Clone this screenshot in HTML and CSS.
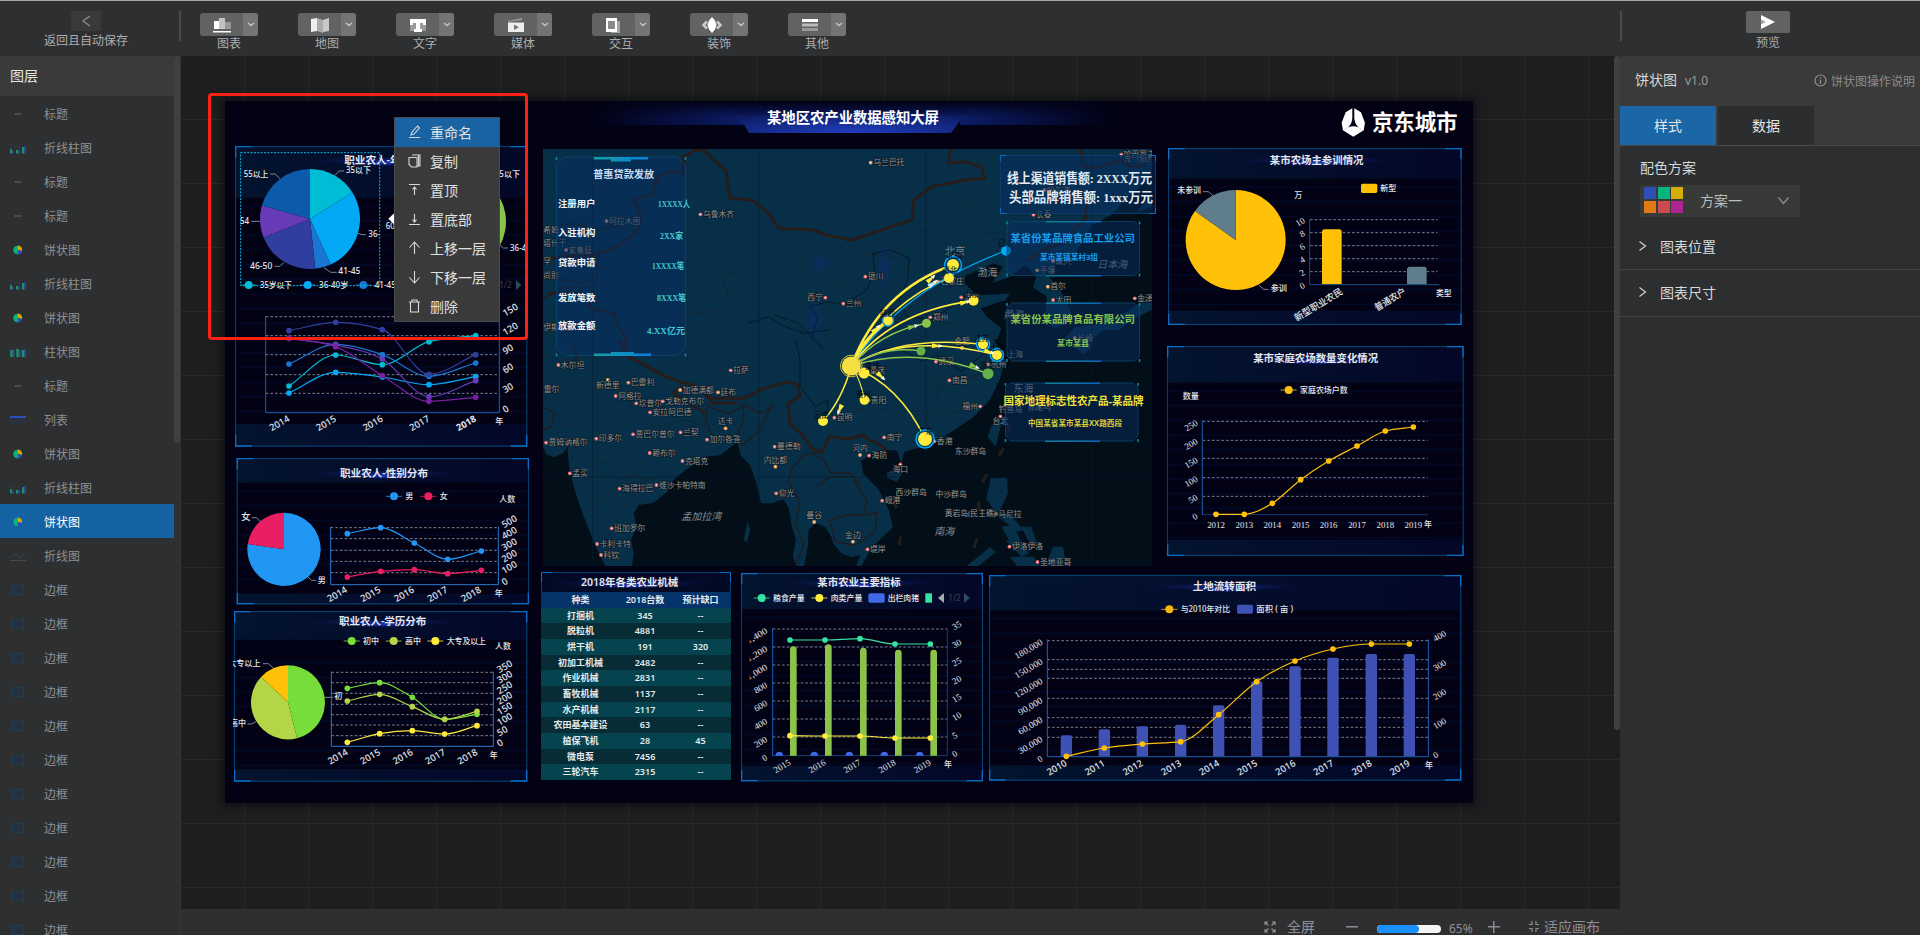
FILE: index.html
```html
<!DOCTYPE html>
<html lang="zh-CN">
<head>
<meta charset="utf-8">
<title>某地区农产业数据感知大屏</title>
<link rel="stylesheet" href="styles.css">
</head>
<body>
<div class="app">
  <header class="topbar">
    <div class="back">
      <div class="back-btn"><svg width="10" height="12" viewBox="0 0 10 12"><path d="M9 1 2 6l7 5" class="ln"/></svg></div>
      <span>返回且自动保存</span>
    </div>
    <div class="tools" id="tools"></div>
    <div class="preview">
      <div class="preview-btn"><svg width="14" height="14" viewBox="0 0 14 14"><path d="M0 0l14 7-14 7z" fill="#fff"/><path d="M0 4.500L5 7 0 9.500z" fill="#a5a5a5"/></svg></div>
      <span>预览</span>
    </div>
  </header>
  <div class="body">
    <aside class="layers">
      <div class="layers-main">
        <h2 class="layers-title">图层</h2>
        <ul class="layer-list" id="layers"></ul>
      </div>
      <div class="track"><div class="thumb thumb-left"></div></div>
    </aside>
    <main class="center">
      <div class="stage">
        <div class="board">
          <svg class="w w-title" viewBox="0 0 1248 40">
            <defs>
              <linearGradient id="wing"><stop offset="0" stop-color="#0a1a6a" stop-opacity="0"/><stop offset="1" stop-color="#0c1c66"/></linearGradient>
              <linearGradient id="wingR"><stop offset="0" stop-color="#0c1c66"/><stop offset="1" stop-color="#0a1a6a" stop-opacity="0"/></linearGradient>
              <radialGradient id="glow" cx=".5" cy="1" r=".75"><stop offset="0" stop-color="#1f3fc0"/><stop offset="1" stop-color="#0b1758"/></radialGradient>
              <linearGradient id="fadeUp" x2="0" y2="1"><stop offset="0" stop-color="#020214"/><stop offset="1" stop-color="#020214" stop-opacity="0"/></linearGradient>
            </defs>
            <rect x="370" y="0" width="150" height="24" fill="url(#wing)"/>
            <rect x="735" y="0" width="150" height="24" fill="url(#wingR)"/>
            <path d="M505 0h245L726 32H524z" fill="url(#glow)"/>
            <rect x="370" y="0" width="515" height="16" fill="url(#fadeUp)"/>
            <text x="628" y="21.500" class="title-text" text-anchor="middle" textLength="172">某地区农产业数据感知大屏</text>
          </svg>
          <svg class="w w-logo" viewBox="574 82 355 92">
            <g fill="#fff">
              <path d="M608 85l-20 12-6 16-6 16 4 24 16-11q12-12 12-30z"/>
              <path d="M614 85l20 12 6 16 6 16-4 24-16-11q-12-12-12-30z"/>
              <path d="M581 152q30-26 60 0l-30 19z"/>
            </g>
            <text x="667" y="151" class="logo-text" textLength="258">京东城市</text>
          </svg>
          <svg class="w w-age" id="age" viewBox="45 45 879 909"></svg>
          <svg class="w w-sex" id="sex" viewBox="48 21 882 444"></svg>
          <svg class="w w-edu" id="edu" viewBox="39 480 885 516"></svg>
          <svg class="w w-map" id="map" viewBox="543 149 609 417"></svg>
          <div class="w w-machines">
            <svg class="machines-title" viewBox="0 0 190 20" id="mtitle"></svg>
            <div class="machine-table" id="machines"></div>
          </div>
          <svg class="w w-index" id="index" viewBox="615 37 732 630"></svg>
          <svg class="w w-land" id="land" viewBox="24 12 1422 624"></svg>
          <svg class="w w-train" id="train" viewBox="51 201 888 537"></svg>
          <svg class="w w-farm" id="farm" viewBox="48 15 897 636"></svg>
        </div>
        <div class="highlight"></div>
        <ul class="menu" id="menu"></ul>
        <div class="thumb thumb-stage"></div>
      </div>
      <footer class="zoombar">
        <svg class="ico-full" width="12" height="12" viewBox="0 0 12 12"><path d="M1 4V1h3M8 1h3v3M11 8v3H8M4 11H1V8M1 1l3.500 3.500M11 1 7.500 4.500M11 11 7.500 7.500M1 11l3.500-3.500" class="ln"/></svg>
        <span class="full-text">全屏</span>
        <span class="minus"></span>
        <span class="bar"><i></i></span>
        <span class="pct">65%</span>
        <span class="plus"></span>
        <svg class="ico-fit" width="10" height="11" viewBox="0 0 10 11"><path d="M0 3.500h3V0M7 0v3.500h3M10 7.500H7V11M3 11V7.500H0" class="ln"/></svg>
        <span>适应画布</span>
      </footer>
    </main>
    <aside class="props">
      <div class="props-head">
        <span class="props-name">饼状图</span><span class="props-ver">v1.0</span>
        <span class="props-help"><svg width="13" height="13" viewBox="0 0 13 13"><circle cx="6.500" cy="6.500" r="5.500" class="ln"/><path d="M6.500 3v1.300M6.500 5.500V10" class="ln"/></svg>饼状图操作说明</span>
      </div>
      <div class="tabs"><span class="tab on">样式</span><span class="tab">数据</span></div>
      <div class="scheme">
        <div class="scheme-label">配色方案</div>
        <div class="select">
          <div class="swatches"><i class="s1"></i><i class="s2"></i><i class="s3"></i><i class="s4"></i><i class="s5"></i><i class="s6"></i></div>
          <span>方案一</span>
          <svg width="11" height="8" viewBox="0 0 11 8"><path d="M.5.5l5 6 5-6" class="ln"/></svg>
        </div>
      </div>
      <div class="fold"><svg width="8" height="10" viewBox="0 0 8 10"><path d="M.5.5l6 4.500-6 4.500" class="ln lt"/></svg>图表位置</div>
      <div class="fold fold2"><svg width="8" height="10" viewBox="0 0 8 10"><path d="M.5.5l6 4.500-6 4.500" class="ln lt"/></svg>图表尺寸</div>
    </aside>
  </div>
</div>
<script src="app.js"></script>
</body>
</html>
```

FILE: styles.css
```css
* { box-sizing: border-box; }
body { margin: 0; background: #2e2f30; overflow: hidden; font-family: "Noto Sans", "Noto Sans CJK SC", sans-serif; font-size: 12px; color: #adadad; }
h2, ul { margin: 0; padding: 0; font-weight: normal; list-style: none; }
svg { display: block; flex: none; }
.ln { fill: none; stroke: #909090; stroke-width: 1.2; }
.lt { stroke: #d0d0d0; }
.app { width: 1920px; height: 935px; display: flex; flex-direction: column; }

.topbar { height: 56px; flex: none; display: flex; border-top: 1px solid #a9a9a9; background: #2e2f30; line-height: 16px; }
.back { width: 181px; padding: 10px 9px 0 0; display: flex; flex-direction: column; align-items: center; gap: 2px; background: linear-gradient(#4a4b4b, #4a4b4b) 179px 10px / 2px 30px no-repeat; }
.back-btn { width: 30px; height: 20px; display: flex; align-items: center; justify-content: center; background: #393a39; border-radius: 2px; }
.tools { width: 1439px; display: flex; gap: 40px; padding: 12px 0 0 19px; }
.tool { width: 58px; display: flex; flex-direction: column; align-items: center; }
.tool-btn { width: 58px; height: 23px; display: flex; border-radius: 3px; overflow: hidden; background: #616362; }
.tool-ico { flex: 1; display: flex; align-items: center; justify-content: center; }
.tool-drop { width: 15px; background: #737574; display: flex; align-items: center; justify-content: center; }
.preview { flex: 1; display: flex; flex-direction: column; align-items: center; gap: 2px; padding: 10px 4px 0 0; background: linear-gradient(#4a4b4b, #4a4b4b) 0 10px / 2px 30px no-repeat; }
.preview-btn { width: 44px; height: 22px; background: #616362; border-radius: 2px; display: flex; align-items: center; justify-content: center; }

.body { flex: 1; min-height: 0; display: flex; }
.layers { width: 181px; display: flex; border-right: 1px solid #333435; overflow: hidden; }
.layers-main { width: 174px; }
.layers-title { height: 40px; line-height: 40px; padding-left: 10px; background: #393a39; color: #e6e6e6; font-size: 14px; }
.layer { height: 34px; display: flex; align-items: center; gap: 17px; padding: 1px 0 0 9px; color: #8e8f92; }
.layer.on { background: #1562a2; color: #fff; }
.thumb { width: 6px; background: #3f4040; border-radius: 3px; }
.thumb-left { height: 387px; }
.thumb-stage { position: absolute; right: 0; top: 0; height: 674px; }

.center { width: 1439px; display: flex; flex-direction: column; }
.stage { flex: 1; position: relative; overflow: hidden; background-color: #1d1e20; background-image: linear-gradient(90deg, transparent 63px, #28292b 63px), linear-gradient(transparent 63px, #28292b 63px); background-size: 64px 64px; }
.board { position: absolute; left: 44px; top: 45px; width: 1248px; height: 702px; background: #020214; box-shadow: 0 0 8px 3px rgba(0, 0, 0, .5); overflow: hidden; }
.w { position: absolute; }
.w-title { left: 0; top: 0; width: 1248px; height: 40px; }
.w-logo { left: 1116px; top: 6px; width: 118px; height: 31px; }
.w-age { left: 10px; top: 44px; width: 293px; height: 303px; }
.w-sex { left: 11px; top: 356px; width: 294px; height: 148px; }
.w-edu { left: 8px; top: 509px; width: 295px; height: 172px; }
.w-map { left: 318px; top: 48px; width: 609px; height: 417px; overflow: visible; }
.w-machines { left: 316px; top: 471px; width: 190px; height: 208px; display: flex; flex-direction: column; }
.w-index { left: 515px; top: 471px; width: 244px; height: 210px; }
.w-land { left: 763px; top: 473px; width: 474px; height: 208px; }
.w-train { left: 942px; top: 46px; width: 296px; height: 179px; }
.w-farm { left: 941px; top: 244px; width: 299px; height: 212px; }
.title-text { font-size: 14.4px; font-weight: 700; fill: #fff; }
.logo-text { font-size: 65px; font-weight: 700; fill: #fff; font-family: "Noto Sans CJK SC", sans-serif; }
.machines-title { width: 190px; height: 20px; }
.machine-table { flex: 1; display: flex; flex-direction: column; }
.mrow { flex: 1; display: grid; grid-template-columns: 79px 50px 61px; align-items: center; text-align: center; font-size: 9px; font-weight: 600; line-height: 12px; color: #e2eaec; white-space: nowrap; background: #082c36; }
.mrow:nth-child(even) { background: #05434f; }
.mrow:first-child { background: #06336a; }

.highlight { position: absolute; left: 27px; top: 37px; width: 320px; height: 247px; border: 3px solid #ff2014; border-radius: 4px; }
.menu { position: absolute; left: 213px; top: 61px; width: 106px; border: 1px solid #4a4c4c; background: #393a39; color: #e0e0e0; font-size: 14px; }
.menu li { height: 29px; display: flex; align-items: center; gap: 9px; padding: 0 0 2px 13px; }
.menu li:first-child { background: #1963a3; }
.menu .ln { stroke: #d8d8d8; stroke-width: 1.1; }

.zoombar { height: 26px; display: flex; align-items: center; padding: 9px 20px 0 1083px; font-size: 14px; line-height: 17px; background: #2e2f31; color: #8f8f93; white-space: nowrap; }
.full-text { margin-left: 11px; width: 59px; }
.minus, .plus { width: 12px; height: 12px; background: linear-gradient(#8a8a8e, #8a8a8e) center / 12px 1.5px no-repeat; }
.plus { margin-left: 15px; width: 12px; background: linear-gradient(#8a8a8e, #8a8a8e) center / 12px 1.5px no-repeat, linear-gradient(#8a8a8e, #8a8a8e) center / 1.5px 12px no-repeat; }
.bar { margin: 4px 0 0 19px; width: 64px; height: 8px; border-radius: 4px; background: #f5f5f5; overflow: hidden; }
.bar i { display: block; width: 42px; height: 8px; border-radius: 4px; background: #1890ff; }
.pct { margin: 4px 0 0 8px; width: 24px; font-size: 12px; line-height: 13px; }
.ico-fit { margin: 0 5px 0 29px; }

.props { width: 300px; background: #2d2e30; color: #d8d8d8; font-size: 14px; white-space: nowrap; }
.props-head { height: 50px; display: flex; align-items: center; padding: 0 5px 4px 15px; background: #393a39; }
.props-ver { margin: 3px 0 0 8px; font-size: 12px; color: #9b9b9b; }
.props-help { margin: 3px 0 0 auto; display: flex; align-items: center; gap: 4px; font-size: 12px; color: #8c8c90; }
.tabs { height: 40px; display: flex; gap: 2px; background: #393a39; border-bottom: 1px solid #48494a; }
.tab { width: 96px; line-height: 40px; text-align: center; background: #2c2d2f; color: #e6e6e6; }
.tab.on { background: #1b66a5; }
.scheme { height: 78px; padding: 12px 20px 0; }
.scheme-label { line-height: 20px; margin-bottom: 7px; }
.select { width: 160px; height: 32px; display: flex; align-items: center; background: #383a38; padding-left: 4px; border-radius: 2px; color: #bcbcbc; }
.select span { width: 78px; margin: -2px 0 0 17px; }
.swatches { display: grid; grid-template-columns: 12px 12px 12px; gap: 2px 1.5px; margin-top: -2px; }
.swatches i { height: 12px; }
.s1 { background: #2d4fb8; } .s2 { background: #06b67c; } .s3 { background: #d2ae06; }
.s4 { background: #e27a14; } .s5 { background: #cb4a4f; } .s6 { background: #ae2591; }
.fold { height: 46px; display: flex; align-items: center; gap: 13px; padding: 0 0 2px 19px; border-bottom: 1px solid #444546; }
.fold2 { height: 47px; }

.t { fill: #e4e7ed; font-weight: 500; font-family: "Noto Sans", "Noto Sans CJK SC", sans-serif; }
.sm { font-size: 24px; }
.num { font-size: 28px; }
.b { font-weight: 700; }
.sim { font-family: "Liberation Serif", "Noto Sans CJK SC", serif; font-size: 27px; }
.h { font-size: 31px; font-weight: 600; }
.dash { stroke: #8d919b; stroke-width: 2.6; stroke-dasharray: 8 6; fill: none; }
.axis { stroke: #1b62b5; stroke-width: 3; fill: none; }
.lead { stroke: #9aa3ad; stroke-width: 2.4; fill: none; }
.city { font-size: 7.8px; fill: #9a9592; paint-order: stroke; stroke: #04121c; stroke-width: 1; }
.sea { font-size: 10px; fill: #858c94; }
.border { fill: none; stroke: #261d1a; stroke-width: 3; stroke-linejoin: round; vector-effect: non-scaling-stroke; }
.thin { stroke-width: 1.4; stroke: #1f1d1e; }
.prov { stroke-width: .9; stroke-dasharray: 3 2; stroke: #171f27; }
.river { fill: none; stroke: #051824; stroke-width: 1; vector-effect: non-scaling-stroke; }
```

FILE: app.js
```js
const $ = id => document.getElementById(id);

/* ---------- editor chrome ---------- */
const toolIcons = {
  '图表': '<path d="M2 4h6v8H2z" fill="#fff"/><path d="M7 1h6v11H7z" fill="#c4c4c4"/><path d="M13 5h6v7h-6z" fill="#989a99"/><path d="M1 14h18v1.500H1z" fill="#fff"/>',
  '地图': '<path d="M1 2l6-1v13l-6 1z" fill="#eee"/><path d="M7 1l6 2v13l-6-2z" fill="#aaa"/><path d="M13 3l6-2v13l-6 1z" fill="#c8c8c8"/>',
  '文字': '<path d="M2 2h16v12H2z" fill="#999"/><path d="M2 2h16v6h-3V6h-3v6h2v3H6v-3h2V6H5v2H2z" fill="#fff"/>',
  '媒体': '<path d="M2 5.500h16V15H2z" fill="#eee"/><path d="M2 4L16 1v2L2 5z" fill="#999"/><path d="M8 7.500l5 2.700-5 2.700z" fill="#777"/>',
  '交互': '<path d="M7 4h9v12H7z" fill="#a5a5a5"/><path d="M2 1h11v14H2z" fill="#fff"/><path d="M4 4h7v8H4z" fill="#8a8a8a"/>',
  '装饰': '<path d="M10 0l3 3.500 1.500 4.500-1.500 4.500L10 16l-3-3.500L5.500 8 7 3.500z" fill="#fff"/><path d="M5 4.500L1.500 8 5 11.500M15 4.500l3.500 3.500-3.500 3.500" fill="none" stroke="#ccc" stroke-width="2.500"/>',
  '其他': '<path d="M2 2h16v3H2z" fill="#fff"/><path d="M2 6.500h16v3H2z" fill="#bbb"/><path d="M2 11h16v3H2z" fill="#999"/>'
};
$('tools').innerHTML = Object.entries(toolIcons).map(([n, p]) =>
  `<div class="tool"><div class="tool-btn"><div class="tool-ico"><svg width="20" height="16" viewBox="0 0 20 16">${p}</svg></div><div class="tool-drop"><svg width="8" height="5" viewBox="0 0 8 5"><path d="M1 1l3 2.500L7 1" fill="none" stroke="#c4c4c4" stroke-width="1.5"/></svg></div></div><span>${n}</span></div>`).join('');

const layerIcons = {
  '标题': '<path d="M6 6h6" stroke="#888" stroke-dasharray="1.500 1"/>',
  '折线柱图': '<path d="M2 7v4.500M8 8v3.500M14 5v6.500" stroke="#159468" stroke-width="2"/><path d="M4 9v2.500M10 8v3.500M16 4v7.500" stroke="#2d4fb8" stroke-width="1.500"/><path d="M1 5h13" stroke="#2c3c68" stroke-dasharray="2 2"/>',
  '饼状图': '<path d="M9 6V1.500A4.500 4.500 0 0 1 13 7z" fill="#d2ae06"/><path d="M9 6l4 1a4.500 4.500 0 0 1-4.500 3.500z" fill="#2d4fb8"/><path d="M9 6l-.5 4.500A4.500 4.500 0 0 1 6 2.500L9 1.500z" fill="#06b67c"/>',
  '柱状图': '<path d="M2.500 4v7M8.500 3v8M14 4v7" stroke="#159468" stroke-width="2.500"/><path d="M4.500 3v8M10.500 4v7M16 3v8" stroke="#2d4fb8" stroke-width="1.500"/>',
  '列表': '<path d="M1 3h16" stroke="#2d4fb8" stroke-width="2"/><path d="M1 4h16v6H1z" fill="#2a3040"/>',
  '折线图': '<path d="M1 8l5-4 5 3 5-4" stroke="#3a4254" fill="none"/><path d="M1 10.500h16" stroke="#4a4a3c"/>',
  '边框': '<path d="M3.500 1.500h11v9h-11z" fill="#26313f" stroke="#1f3f56"/>'
};
const layers = '标题,折线柱图,标题,标题,饼状图,折线柱图,饼状图,柱状图,标题,列表,饼状图,折线柱图,饼状图,折线图'.split(',').concat(Array(11).fill('边框'));
$('layers').innerHTML = layers.map((n, i) =>
  `<li class="layer${i === 12 ? ' on' : ''}"><svg width="18" height="12" viewBox="0 0 18 12">${layerIcons[n]}</svg><span>${n}</span></li>`).join('');

const menu = [
  ['重命名', 'M1 12.500h11M3 10l1-3 5.500-6 2 2L6 9z'],
  ['复制', 'M4 1h8v11H9.500M1 3.500h8V13H3.500L1 10.500zM10.500 1v11'],
  ['置顶', 'M1 1.500h11M6.500 12V4M4.500 6.500l2-2.500 2 2.500'],
  ['置底部', 'M1 12.500h11M6.500 2v8M4.500 7.500l2 2.500 2-2.500'],
  ['上移一层', 'M6.500 13V1M1.500 6.500l5-5.500 5 5.500'],
  ['下移一层', 'M6.500 1v12M1.500 7.500l5 5.500 5-5.500'],
  ['删除', 'M1 3h11M4 3V1h5v2M2.500 3v10h8V3']
];
$('menu').innerHTML = menu.map(([n, d]) => `<li><svg width="13" height="14" viewBox="0 0 13 14"><path class="ln" d="${d}"/></svg>${n}</li>`).join('');

/* ---------- chart helpers ---------- */
const txt = (x, y, s, cls = 'sm', o = {}) =>
  `<text x="${x}" y="${y}" class="t ${cls}" text-anchor="${o.a || 'start'}"${o.r ? ` transform="rotate(${o.r} ${x} ${y})"` : ''}${o.w ? ` textLength="${o.w}" lengthAdjust="spacingAndGlyphs"` : ''}${o.f ? ` style="fill:${o.f}"` : ''}>${s}</text>`;
const hline = (x0, x1, ys) => ys.map(y => `<path class="dash" d="M${x0} ${y}H${x1}"/>`).join('');

/* Monotone cubic through the points */
function curve(p) {
  const n = p.length, s = [], m = [];
  for (let i = 0; i < n - 1; i++) s.push((p[i + 1][1] - p[i][1]) / (p[i + 1][0] - p[i][0]));
  for (let i = 0; i < n; i++) {
    if (i === 0) m.push(s[0]);
    else if (i === n - 1) m.push(s[n - 2]);
    else m.push(s[i - 1] * s[i] <= 0 ? 0 : Math.sign(s[i]) * Math.min(2 * Math.abs(s[i - 1]), 2 * Math.abs(s[i]), Math.abs(s[i - 1] + s[i]) / 2));
  }
  let d = `M${p[0]}`;
  for (let i = 0; i < n - 1; i++) {
    const h = (p[i + 1][0] - p[i][0]) / 3;
    d += `C${p[i][0] + h} ${p[i][1] + m[i] * h} ${p[i + 1][0] - h} ${p[i + 1][1] - m[i + 1] * h} ${p[i + 1]}`;
  }
  return d;
}
const series = (xs, ys, c, straight) => {
  const p = xs.map((x, i) => [x, ys[i]]);
  return `<path d="${straight ? 'M' + p.join('L') : curve(p)}" fill="none" stroke="${c}" stroke-width="3.6"/>` +
    p.map(q => `<circle cx="${q[0]}" cy="${q[1]}" r="8.500" fill="${c}"/>`).join('');
};
function pie(cx, cy, r, parts) {
  let a = 0, out = '';
  const pt = t => [cx + r * Math.sin(t * Math.PI / 180), cy - r * Math.cos(t * Math.PI / 180)];
  for (const [e, c] of parts) {
    out += `<path d="M${cx} ${cy}L${pt(a)}A${r} ${r} 0 ${e - a > 180 ? 1 : 0} 1 ${pt(e)}z" fill="${c}"/>`;
    a = e;
  }
  return out;
}
const legend = (x, y, s, c, w) => `<path d="M${x - 24} ${y}h48" stroke="${c}" stroke-width="2.500"/><circle cx="${x}" cy="${y}" r="12" fill="${c}"/>` + txt(x + 34, y + 8, s, 'sm', { w });
let uid = 0;
function frame(x0, y0, x1, y1, top, bottom) {
  const g = 'fr' + uid++;
  let o = `<defs><linearGradient id="${g}"><stop offset="0" stop-color="#03142f"/><stop offset="1" stop-color="#030728"/></linearGradient></defs>
  <rect x="${x0}" y="${y0}" width="${x1 - x0}" height="${top}" fill="url(#${g})"/><rect x="${x0}" y="${y1 - bottom}" width="${x1 - x0}" height="${bottom}" fill="url(#${g})"/>`;
  for (let y = y0 + top + 25; y < y1 - bottom; y += 44) o += `<path d="M${x0} ${y}H${x1}" stroke="#030824" stroke-width="5"/>`;
  o += `<rect x="${x0 + 1.500}" y="${y0 + 1.500}" width="${x1 - x0 - 3}" height="${y1 - y0 - 3}" fill="none" stroke="#04406f" stroke-width="3.500"/>`;
  o += `<path d="M${x0 + 2} ${y0 + 34}V${y0 + 2}h48M${x1 - 50} ${y0 + 2}h48v32M${x1 - 2} ${y1 - 34}V${y1 - 2}h-48M${x0 + 50} ${y1 - 2}H${x0 + 2}v-32" fill="none" stroke="#0a6cc4" stroke-width="4"/>`;
  return o;
}
function heading(cx, y, s, w) {
  const g = 'hd' + uid++;
  return `<defs><radialGradient id="${g}"><stop offset="0" stop-color="#1f3cc0"/><stop offset=".5" stop-color="#13248a" stop-opacity=".8"/><stop offset="1" stop-color="#0b1a60" stop-opacity="0"/></radialGradient></defs>
  <ellipse cx="${cx}" cy="${y - 8}" rx="240" ry="12" fill="url(#${g})" opacity=".45"/><ellipse cx="${cx}" cy="${y - 2}" rx="120" ry="11" fill="url(#${g})"/>` + txt(cx, y + 1, s, 'h', { a: 'middle', w });
}
const years = (xs, y, from, cls = 'num') => xs.map((x, i) => txt(x, y, from + i, cls, { a: 'end', r: -30 })).join('');

/* ---------- age ---------- */
{
  const xs = [207, 347, 487, 627, 767];
  $('age').innerHTML = frame(45, 48, 922, 950, 155, 68) + heading(505, 100, '职业农人-年龄分布', 265) +
    pie(270, 267, 150, [[58, '#00bcd4'], [155.6, '#03a9f4'], [173.9, '#1976d2'], [248.2, '#303f9f'], [285.6, '#673ab7'], [360, '#0d5aaa']]) +
    pie(708, 275, 150, [[60, '#fdd835'], [140, '#8bc34a'], [360, '#4caf50']]) +
    '<path class="lead" d="M343 137l15-14h14M180 146l-15-14h-14M94 274h25M414 310l12 4h12M192 397l-12 12h-16M312 413l20 14h18M840 345l10 9h14"/>' +
    txt(378, 130, '35以下', 'sm', { w: 75 }) + txt(71, 142, '55以上', 'sm', { w: 74 }) + txt(60, 282, '54') + txt(445, 322, '36-') + txt(90, 416, '46-50', 'sm', { w: 67 }) + txt(355, 433, '41-45', 'sm', { w: 66 }) +
    txt(838, 142, '5以下', 'sm', { w: 62 }) + txt(870, 362, '36-4') + txt(497, 297, '60') +
    [[86, '#00bcd4', '35岁以下', 96], [263, '#03a9f4', '36-40岁', 88], [430, '#1976d2', '41-45岁', 88]].map(([x, c, s, w]) => legend(x, 465, s, c, w)).join('') +
    '<rect x="62" y="68" width="417" height="399" fill="none" stroke="#0cb6e0" stroke-width="3" stroke-dasharray="6 4"/><path d="M505 266l25-24v48z" fill="#fff"/><path d="M888 450v30l16-15z" fill="#2c4a60"/>' +
    txt(838, 473, '1/2', 'sm', { f: '#343a44' }) +
    hline(137, 838, [560, 617, 674, 734, 790]) + '<path class="axis" d="M137 558V848H838V560"/>' +
    series(xs, [768, 675, 704, 635, 617], '#00bcd4') + series(xs, [789, 727, 741, 764, 740], '#03a9f4') + series(xs, [702, 643, 674, 739, 699], '#1976d2') +
    series(xs, [602, 577, 599, 733, 674], '#303f9f') + series(xs, [625, 645, 687, 800, 752], '#673ab7') + series(xs, [625, 650, 737, 814, 802], '#7b1fa2') +
    years(xs.slice(0, 4).map(x => x + 4), 872, 2014) + txt(771, 872, '2018', 'num b', { a: 'end', r: -30 }) +
    [[150, 560], [120, 617], [90, 674], [60, 731], [30, 790], [0, 850]].map(([s, y]) => txt(855, y, s, 'num', { r: -30 })).join('') + txt(826, 882, '年');
}
/* ---------- gender and education ---------- */
{
  const xs = [382, 482, 583, 683, 784];
  $('sex').innerHTML = frame(50, 24, 927, 463, 74, 32) + heading(492, 79, '职业农人-性别分布', 264) +
    pie(192, 298, 110, [[278.4, '#2196f3'], [360, '#e91e63']]) + '<path class="lead" d="M122 215l-13-12H95M261 379l14 12h14"/>' +
    txt(64, 211, '女', 'num') + txt(293, 399, '男', 'sm') + legend(522, 139, '男', '#2196f3') + legend(625, 139, '女', '#e91e63') + txt(838, 156, '人数', 'sm', { w: 48 }) +
    hline(332, 834, [233, 266, 301, 334, 368]) + '<path class="axis" style="stroke:#2b78cc" d="M332 230V404H835V230"/>' +
    series(xs, [251, 233, 279, 328, 303], '#2196f3') + series(xs, [381, 364, 359, 371, 361], '#e91e63') + years(xs.map(x => x + 2), 425, 2014) +
    [500, 400, 300, 200, 100, 0].map((s, i) => txt(852, 235 + i * 34.4, s, 'num', { r: -30 })).join('') + txt(824, 437, '年');
  const xe = [382, 479, 577, 674, 771];
  $('edu').innerHTML = frame(42, 483, 922, 995, 86, 38) + heading(488, 524, '职业农人-学历分布', 262) +
    pie(204, 757, 111, [[165.8, '#76dd3a'], [313.2, '#b3d548'], [360, '#ffc107']]) + '<path class="lead" d="M160 654l-15-13h-16M315 742h25M108 815l-12 7h-14"/>' +
    txt(24, 648, '大专以上', 'sm', { w: 98 }) + txt(343, 748, '初') + txt(30, 828, '高中', 'sm', { w: 48 }) +
    legend(395, 573, '初中', '#76dd3a', 48) + legend(521, 573, '高中', '#b3d548', 48) + legend(646, 573, '大专及以上', '#ffeb3b', 118) + txt(825, 597, '人数', 'sm', { w: 48 }) +
    hline(334, 818, [667, 698, 730, 763, 794, 825, 857]) + '<path class="axis" style="stroke:#2b78cc" d="M334 665V889H820V665"/>' +
    series(xe, [715, 698, 742, 808, 793], '#76dd3a') + series(xe, [753, 733, 770, 808, 784], '#b3d548') + series(xe, [877, 851, 842, 852, 827], '#ffeb3b') + years(xe.map(x => x + 4), 912, 2014) +
    [350, 300, 250, 200, 150, 100, 50, 0].map((s, i) => txt(838, 670 + i * 31.600, s, 'num', { r: -30 })).join('') + txt(809, 923, '年');
}
/* ---------- machine table ---------- */
$('mtitle').innerHTML = `<rect width="190" height="20" fill="#030a26"/><g transform="translate(0 -9.700) scale(.3333)">${heading(266, 71, '2018年各类农业机械', 292)}</g><path d="M.5 20V.5h189V20" fill="none" stroke="#04406f"/><path d="M.5 10V.5H11M179 .5h10.500V10" fill="none" stroke="#0a6cc4"/>`;
$('machines').innerHTML = [['种类', '2018台数', '预计缺口'], ['打捆机', 345, '--'], ['脱粒机', 4881, '--'], ['烘干机', 191, 320], ['初加工机械', 2482, '--'], ['作业机械', 2831, '--'], ['畜牧机械', 1137, '--'], ['水产机械', 2117, '--'], ['农田基本建设', 63, '--'], ['植保飞机', 28, 45], ['微电泵', 7456, '--'], ['三轮汽车', 2315, '--']]
  .map(r => `<div class="mrow">${r.map(c => `<span>${c}</span>`).join('')}</div>`).join('');
/* ---------- main indicators ---------- */
{
  const xs = [765, 870, 975, 1080, 1186];
  $('index').innerHTML = frame(618, 40, 1344, 665, 108, 46) + heading(972, 78, '某市农业主要指标', 250) +
    legend(680, 115, '粮食产量', '#37e3a1', 95) + legend(853, 115, '肉类产量', '#ffeb3b', 95) + '<rect x="1000" y="101" width="49" height="28" rx="5" fill="#3f69e8"/>' + txt(1058, 123, '出栏肉猪', 'sm', { w: 94 }) +
    '<rect x="1171" y="101" width="20" height="28" fill="#37e3a1"/><path d="M1227 100v30l-18-15z" fill="#aaa"/><path d="M1287 100v30l18-15z" fill="#2c4a60"/>' + txt(1240, 123, '1/2', 'sm', { f: '#3a3d44' }) +
    hline(713, 1237, [208, 262, 316, 370, 424, 478, 532]) + '<path class="axis" style="stroke:#123f7c" d="M713 588H1237V206"/><path class="axis" d="M713 206V590"/>' +
    xs.map((x, i) => `<path d="M${x} 588V${[270, 264, 274, 280, 280][i]}q0-10 10-10t10 10V588z" fill="#8bc34a"/><path d="M${x - 43} 588v-4q2-8 11-8t11 8v4z" fill="#3f69e8"/>`).join('') +
    series(xs, [241, 241, 237, 253, 253], '#37e3a1') + series(xs, [528, 529, 529, 535, 535], '#ffeb3b') + years(xs.map(x => x + 4), 614, 2015, 'sim') +
    [['1,400', 68], ['1,200', 68], ['1,000', 68], ['800', 41], ['600', 41], ['400', 41], ['200', 41], ['0', 13]].map(([s, w], i) => txt(699, 219 + i * 54.300, s, 'sim', { a: 'end', r: -30, w })).join('') +
    '<rect x="622" y="190" width="22" height="190" fill="#020214"/>' +
    [35, 30, 25, 20, 15, 10, 5, 0].map((s, i) => txt(1258, 212 + i * 54.500, s, 'sim', { r: -30 })).join('') + txt(1227, 621, '年');
}
/* ---------- land transfer ---------- */
{
  const xs = [259, 373, 487, 602, 716, 830, 945, 1059, 1174, 1288], top = [496, 478, 469, 464, 406, 334, 289, 263, 252, 252];
  $('land').innerHTML = frame(27, 15, 1444, 632, 106, 46) + heading(733, 58, '土地流转面积', 190) +
    legend(568, 118, '与2010年对比', '#f5b812', 148) + '<rect x="771" y="104" width="48" height="27" rx="5" fill="#3f51b5"/>' + txt(829, 125, '面积 ( 亩 )', 'sm', { w: 110 }) +
    hline(202, 1345, [212, 269, 298, 325, 385, 443, 472, 502]) +
    xs.map((x, i) => `<path d="M${x - 17} 559V${top[i] + 6}q0-6 6-6h22q6 0 6 6V559z" fill="#3f51b5"/>`).join('') +
    '<path class="axis" d="M202 208V560H1345V208"/>' + series(xs, [559, 534, 522, 515, 434, 335, 273, 237, 222, 222], '#ffc107') + years(xs.map(x => x + 4), 585, 2010) +
    [['180,000', 92], ['150,000', 92], ['120,000', 92], ['90,000', 80], ['60,000', 80], ['30,000', 80], ['0', 13]].map(([s, w], i) => txt(190, 222 + i * 58.200, s, 'sim', { a: 'end', r: -30, w })).join('') +
    [400, 300, 200, 100, 0].map((s, i) => txt(1366, 216 + i * 87.500, s, 'sim', { r: -30 })).join('') + txt(1335, 593, '年');
}
/* ---------- training ---------- */
$('train').innerHTML = frame(54, 204, 935, 735, 92, 43) + heading(500, 250, '某市农场主参训情况', 281) +
  pie(257, 480, 150, [[305.5, '#ffc107'], [360, '#607d8b']]) + '<path class="lead" d="M190 348l-15-13h-16M326 615l15 13h14"/>' + txt(82, 340, '未参训', 'sm', { w: 71 }) + txt(362, 634, '参训', 'sm', { w: 49 }) +
  txt(433, 353, '万', 'sm') + '<rect x="633" y="311" width="49" height="28" rx="5" fill="#ffc107"/>' + txt(691, 332, '新型', 'sm', { w: 48 }) +
  hline(480, 862, [419, 458, 497, 536, 575]) + '<path d="M516 613V456q0-8 8-8h43q8 0 8 8V613z" fill="#ffc107"/><path d="M771 613V568q0-8 8-8h43q8 0 8 8V613z" fill="#607d8b"/><path class="axis" style="stroke:#1a4f88" d="M479 417V614H868"/>' +
  [10, 8, 6, 4, 2, 0].map((s, i) => txt(467, 427 + i * 39, s, 'sim', { a: 'end', r: -30 })).join('') +
  txt(581, 640, '新型职业农民', 'num', { a: 'end', r: -31, w: 164 }) + txt(770, 640, '普通农户', 'num', { a: 'end', r: -31, w: 104 }) + txt(858, 648, '类型', 'sm', { w: 47 });
/* ---------- family farms ---------- */
{
  const xs = [198, 283, 367, 452, 536, 621, 706, 790];
  $('farm').innerHTML = frame(51, 18, 941, 648, 110, 48) + heading(497, 66, '某市家庭农场数量变化情况', 375) + legend(416, 150, '家庭农场户数', '#ffc107', 143) + txt(98, 178, '数量', 'sm', { w: 49 }) +
    hline(158, 833, [244, 301, 355, 413, 469]) + '<path class="axis" style="stroke:#12366e" d="M157 524H833"/><path class="axis" d="M157 241V525"/>' +
    series(xs, [523, 523, 490, 419, 363, 318, 273, 261], '#ffc107') +
    xs.map((x, i) => txt(x, 563, 2012 + i, 'sim', { a: 'middle', w: 53 })).join('') + [250, 200, 150, 100, 50, 0].map((s, i) => txt(145, 254 + i * 56, s, 'sim', { a: 'end', r: -30 })).join('') + txt(822, 560, '年');
}

/* ---------- map ---------- */
const NORTH = 'translate(540 0) scale(.4082 .3333)', SOUTH = 'translate(535 340) scale(.3954 .3333)';
const S = (x, y) => [535 + x * .3954, 340 + y / 3], N = (x, y) => [540 + x * .4082, y / 3];
const cities = [];
const add = (f, list) => list.forEach(([x, y, s, mode]) => cities.push([...f(x, y), s, mode]));
add(N, [[810, 488, '乌兰巴托', 'o'], [393, 643, '乌鲁木齐'], [163, 663, '阿拉木图'], [64, 750, '安集延'], [797, 830, '银川'], [699, 893, '西宁', 'l'], [743, 911, '兰州'], [956, 952, '郑州'], [1236, 570, '哈尔滨'], [1209, 644, '长春'], [1257, 783, '咸兴'], [1218, 811, '平壤', 'o'], [1244, 860, '首尔', 'o'], [1257, 900, '大田'], [1457, 895, '金泽'], [1310, 1014, '长崎'], [1424, 464, '哈巴罗夫'], [975, 845, '石家庄'], [1032, 892, '济南']]);
add(S, [[59, 75, '木尔坦'], [184, 120, '新德里', 'b'], [236, 128, '巴雷利'], [204, 168, '阿格拉'], [256, 190, '坎普尔'], [323, 184, '戈勒克布尔'], [291, 217, '安拉阿巴德'], [367, 150, '加德满都', 'o'], [463, 157, '廷布', 'o'], [495, 91, '拉萨'], [482, 265, '达卡', 't'], [155, 296, '印多尔'], [248, 283, '贾巴尔普尔'], [368, 277, '兰契'], [435, 299, '加尔各答'], [28, 308, '贾姆讷格尔'], [290, 339, '赖布尔'], [373, 363, '克塔克'], [88, 400, '孟买'], [214, 446, '海得拉巴'], [307, 435, '维沙卡帕特南'], [606, 320, '曼德勒'], [608, 380, '内比都', 't'], [610, 460, '仰光'], [706, 546, '曼谷', 't'], [804, 605, '金边', 't'], [841, 628, '堤岸'], [878, 482, '岘港'], [822, 345, '河内', 't'], [845, 347, '海防'], [883, 292, '南宁'], [924, 373, '海口', 'b2'], [757, 233, '昆明'], [843, 181, '贵阳'], [1048, 121, '南昌'], [1014, 65, '武汉'], [1146, 73, '杭州'], [1126, 199, '福州', 'l'], [1177, 229, '台北', 'b2'], [1010, 304, '香港'], [1165, 522, '马尼拉', 'o'], [1200, 620, '伊洛伊洛'], [1271, 666, '圣地亚哥'], [194, 565, '班加罗尔'], [157, 612, '卡利卡特'], [167, 645, '科钦'], [840, 92, '重庆'], [1080, 24, '合肥', 't']]);
const cityMarks = cities.map(([x, y, s, m]) => {
  const c = m === 'o' || m === 't' || m === 'b' ? '#e29a5a' : '#e56a6a';
  let tx = x + 2.500, ty = y + 2.500, a = 'start';
  if (m === 'l') { tx = x - 2.500; a = 'end'; }
  if (m === 't') { tx = x; ty = y - 4; a = 'middle'; }
  if (m === 'b' || m === 'b2') { tx = x; ty = y + 8; a = 'middle'; }
  return `<circle cx="${x}" cy="${y}" r="1.900" fill="${c}"/><circle cx="${x}" cy="${y}" r=".7" fill="#fff"/><text x="${tx}" y="${ty}" class="city" text-anchor="${a}">${s}</text>`;
}).join('');
const loose = [[N(8, 700), '希姆'], [N(8, 738), '塔什干'], [N(8, 793), '罕'], [N(8, 834), '尚别'], [N(8, 990), '伊斯兰堡'], [S(22, 156), '雷尔'], [S(1062, 341), '东沙群岛'], [S(912, 464), '西沙群岛'], [S(1013, 470), '中沙群岛'], [S(1036, 527), '黄岩岛(民主礁)'], [S(1173, 215), '钓鱼岛'], [S(1246, 210), '赤尾屿'], [N(1430, 482), '克（伯力'], [S(1195, 50), '上海']]
  .map(([[x, y], s]) => `<text x="${x}" y="${y}" class="city">${s}</text>`).join('') +
  [[N(1365, 804), '日本海', 1], [N(1072, 828), '渤海'], [N(1134, 953), '黄海', 1], [S(1210, 156), '东海'], [S(1010, 585), '南海', 1], [S(370, 541), '孟加拉湾', 1], [N(992, 764), '北京']]
    .map(([[x, y], s, i]) => `<text x="${x}" y="${y}" class="sea"${i ? ' font-style="italic"' : ''}>${s}</text>`).join('');

const O = [851.3, 366];
const flights = [
  [953, 265, 880, 290, '#ffeb3b', 2.500], [949, 278, 890, 300, '#ffeb3b', 1.500], [1006, 250.700, 900, 290, '#03a9f4', 1.200], [973.500, 300.700, 890, 312, '#ffeb3b', 1.800],
  [888, 320.700, 862, 340, '#ffeb3b', 3], [926.500, 323.300, 880, 332, '#8bc34a', 1.500], [983, 344.300, 900, 335, '#ffeb3b', 1.500], [997, 355, 905, 332, '#ffeb3b', 1.500],
  [921, 351, 885, 345, '#8bc34a', 1.500], [988, 373.700, 915, 345, '#8bc34a', 1.500], [864.400, 400, 861, 380, '#ffeb3b', 1.200], [823, 421, 842, 400, '#ffeb3b', 1.500], [925, 439, 900, 385, '#ffeb3b', 1.500], [864, 373, 858, 368, '#ffeb3b', 2]
].map(([x, y, cx, cy, c, w]) => `<path d="M${O}Q${cx} ${cy} ${x} ${y}" fill="none" stroke="${c}" stroke-width="${w}"/>`).join('') +
  [[953, 265, 8.500, '#03a9f4'], [925, 439, 9, '#03a9f4'], [983, 344.300, 6.500, '#03a9f4'], [997, 355, 6.500, '#03a9f4'], [888, 320.700, 5.500, '#1598c0']].map(([x, y, r, c]) => `<circle cx="${x}" cy="${y}" r="${r}" fill="#063a63" stroke="${c}" stroke-width="1.500"/>`).join('') +
  [[953, 265, 6], [949, 278, 5], [973.500, 300.700, 5], [888, 320.700, 4.800], [983, 344.300, 5], [997, 355, 5], [864.400, 400, 4.800], [823, 421, 5], [925, 439, 7], [864, 373, 5.500], [1006, 250.700, 5, '#03a9f4'], [926.500, 323.300, 4.500, '#8bc34a'], [921, 351, 4.500, '#66b04a'], [988, 373.700, 5.500, '#66b04a']].map(([x, y, r, c]) => `<circle cx="${x}" cy="${y}" r="${r}" fill="${c || '#ffeb3b'}"/>`).join('') +
  `<circle cx="${O[0]}" cy="${O[1]}" r="9.500" fill="#f5df45"/><circle cx="${O[0]}" cy="${O[1]}" r="10.800" fill="none" stroke="#d8c43a"/>` +
  [[934, 276, -42, '#ffeb3b'], [936, 281, -38, '#bfe9ff'], [969, 301.500, -12, '#ffeb3b'], [879, 326, -45, '#ffeb3b'], [917, 325.500, -15, '#8bc34a'], [941, 346, 2, '#ffeb3b'], [993, 353, 15, '#ffeb3b'], [978, 368, 25, '#8bc34a'], [838, 413, 115, '#ffeb3b'], [884, 379, 42, '#ffeb3b']]
    .map(([x, y, r, c]) => `<g transform="translate(${x} ${y}) rotate(${r})"><path d="M-9-2.500L1 0l-10 2.500z" fill="${c}"/><path d="M-3-2l5 2-5 2 1-2z" fill="#fff"/></g>`).join('') +
  [[947, 258, '北京'], [942, 273, '河北'], [964, 297, '山东'], [880, 316, '陕西'], [974, 341, '江苏'], [990, 350, '上海'], [865, 369, '重庆'], [856, 397, '贵州'], [814, 418, '云南'], [918, 434, '广东'], [998, 246, '辽宁'], [980, 368, '浙江']].map(([x, y, s]) => `<text x="${x}" y="${y}" font-size="7.5" fill="#04070c">${s}</text>`).join('');

const info = (x0, y0, x1, y1, k = 5) => `<path d="M${x0 + k} ${y0}H${x1 - k}L${x1} ${y0 + k}V${y1 - k}L${x1 - k} ${y1}H${x0 + k}L${x0} ${y1 - k}V${y0 + k}z" fill="#052d60" fill-opacity=".5" stroke="#0b4a78" stroke-opacity=".7"/>
  <path d="M${x0} ${y0 + 3}v-3M${x1} ${y0 + 3}v-3M${x0} ${y1 + 1}v-3M${x1} ${y1 + 1}v-3" stroke="#1188b0" stroke-width="1.500"/>`;
const mt = (x, y, s, size, color, w, a = 'start', wt = 700, fam = '') => `<text x="${x}" y="${y}" font-size="${size}" fill="${color}" font-weight="${wt}" text-anchor="${a}" textLength="${w}" lengthAdjust="spacingAndGlyphs"${fam ? ` font-family="${fam}"` : ''}>${s}</text>`;
const SER = "'Liberation Serif','Noto Sans CJK SC',serif";
$('map').innerHTML = `
<defs><clipPath id="mc"><rect x="543" y="149" width="609" height="417"/></clipPath>
<linearGradient id="tip" gradientUnits="userSpaceOnUse" x1="590" x2="650"><stop offset="0" stop-color="#16a39a"/><stop offset="1" stop-color="#0a7ee0"/></linearGradient>
<linearGradient id="tipR"><stop offset="0" stop-color="#0d7f92"/><stop offset="1" stop-color="#0b63b8"/></linearGradient>
<radialGradient id="spot"><stop offset="0" stop-color="#0a2a86" stop-opacity=".4"/><stop offset="1" stop-color="#0a2a86" stop-opacity="0"/></radialGradient></defs>
<g clip-path="url(#mc)">
<rect x="543" y="149" width="609" height="417" fill="#082f48"/>
<g transform="${NORTH}">
  <path fill="#020f18" d="M1119 1022L1130 985 1095 950 1080 925 1140 900 1152 880 1110 884 1070 885 1040 850 1042 828 1080 806 1110 790 1134 800 1108 848 1150 832 1190 795 1216 830 1208 862 1242 890 1236 960 1260 985 1292 970 1302 940 1275 870 1240 822 1272 780 1312 760 1340 705 1352 675 1400 645 1442 590 1499 530V1022z"/>
  <path fill="#082f48" d="M1280 1022l30-40 60-10 50-25 79-60V930l-50 30-30 30-40 0-30 32zM1460 640l39-60v40z"/>
  <path class="river" d="M510 970l50-20 40 30 50 20 60-10M665 1022L680 950 660 920 705 905 745 915 800 870 820 810 815 760 860 750 905 775 900 840 880 900 900 950 960 960 1030 900M575 945l60 25 60 80"/>
  <path class="border prov" d="M560 700L545 760 520 800 450 830 460 890 520 915 560 900 620 930M700 720L770 760 870 770 905 700 960 690 990 620 1080 600 1140 560M860 980L900 930 960 880 1010 860M1000 780L1060 760 1090 700 1160 700M930 1022L960 980 1050 960M240 700L330 690 400 740 470 810M620 720l20 70 60 50 60 20M0 570L120 560 220 600M360 700l-30 60 80 60 60 60-30 50-120 20-90-10"/>
  <path class="border thin" d="M0 690l80-20 60 20 50-10 50 15M0 780l90-20 60 15M20 830l80 20 40-20 0-40M0 900l60-40 80 0"/>
  <path class="border" d="M0 780L60 770 130 765 190 740 240 690 245 640 230 602 275 580 290 530 320 515 350 520 352 470 380 450 400 450 425 480 455 510 465 595 520 600 560 640 585 685 670 690 700 705 765 720 860 680 912 660 915 600 960 560 1040 540 1090 535 1080 500 1040 485 1000 490 1005 445M1325 445l5 55 40 2 55-22 20 20 40-5M1310 570l30 30-5 60-25 20-30 50-40 15-50 40M20 880l80 0 25 45 55 15 10 40 20 30 0 40"/>
</g>
<g transform="${SOUTH}">
  <path fill="#020f18" d="M20 318L30 345 50 352 72 338 82 320 86 380 100 450 120 520 140 580 152 615 168 655 180 680H20zM245 680L250 640 243 600 256 560 250 520 262 495 300 488 335 455 350 420 378 392 432 350 470 345 512 305 520 345 545 378 560 430 572 490 600 490 628 478 642 505 650 560 660 600 652 650 662 680zM680 680L690 620 692 570 710 548 735 562 750 592 755 612 775 640 800 652 822 645 812 680zM825 680L850 625 905 562 895 510 870 450 830 400 825 362 860 337 890 330 916 332 926 372 934 335 1010 310 1060 270 1110 230 1150 180 1175 120 1188 60 1160 -2H1568V680z"/>
  <path fill="#082f48" d="M1145 290L1155 255 1172 235 1180 250 1165 320zM890 398l25-13 16 10-16 30-24-12zM1152 415h42l2 45-20 50 30 20 30 40-15 5-50-45-30-55 8-40zM1180 560l30-5 20 50-20 20zM1190 600l40 10 20 30-20 10zM1230 560l25 0 15 50-15 10zM1090 680l60-58 16 14-46 44zM1200 650l60 0 20 28h-60zM528 600l10-58 6 30-8 35zM1365 20l25-22h20l-5 30-20 15zM1290 680l20-60 25 0 10 60z"/>
  <path class="river" d="M660 0l10 60 0 80 40 60 30-20 0 40M860 30l60-5 60 40 40-20 60 50 60-60"/>
  <path class="border prov" d="M100 150L150 200 120 250 60 260M200 60L260 120 240 200 300 260 380 240 430 260M80 350l60 30 60-20 40 50 60 10M120 520l60-40 30-60 60-20M180 600l30-60 20-50M430 220l-40 60 30 50M1000 310l-30-60 60-40 50 10M880 240l60-30 60 10 20-60 0-60M960 100l60 40 60-10 60-40M800 200l50 20 60-20 10-60M1050 200l30-70 50-30"/>
  <path class="border thin" d="M20 200l30 20-10 40-20 10M95 0L105 55 70 80M437 190l-5 50 20 60M437 200l50 20 40-20 0 40-20 60M520 190l50 30 30-20M600 190l-30 80-50 50M650 385l30-40 35-10M700 340l30 20 20 40 50 0 20 50 20 30-10 50M650 385l-10 40 30 60-10 70 20 60-20 60M715 440l30-30 60 0 20 30M745 540l40-14 50 0 30-10-5 60-50 40-50-10z"/>
  <path class="border" d="M212 0L235 50 270 70 330 110 380 130 400 135 420 150 440 175 530 175 572 148 640 125 665 135 670 170 640 190 645 250 680 290 700 325 725 338 745 290 790 297 830 285 845 300 870 312 890 330M370 140l-20 20 80 60M430 150l20 40 60 0M1185 325l-12 22M1142 402l-10 26M1122 485l0 25M1118 595l-8 28M925 590l-4 25M905 485l10 20M1200 250l-2 25"/>
</g>
<path d="M592.500 149V566M759 149V566M926 149V566M1092 149V566M543 477H1152" stroke="#041c2c" stroke-opacity=".55" fill="none"/>
<ellipse cx="813" cy="320" rx="10" ry="24" fill="url(#spot)"/><ellipse cx="884" cy="268" rx="10" ry="28" fill="url(#spot)"/><ellipse cx="820" cy="263" rx="12" ry="12" fill="url(#spot)"/><ellipse cx="870" cy="358" rx="22" ry="18" fill="url(#spot)"/>
${cityMarks}${loose}
</g>
${info(556.5, 157, 685.500, 355.500, 8)}
<path d="M594 157H648V159.500H631V161.500H611V159.500H594zM594 356V353.500H611V352H634V353.500H651V356z" fill="url(#tip)"/>
${flights}
<rect x="1000.500" y="155.500" width="155" height="58" fill="#052d60" fill-opacity=".5" stroke="#0a3a6c"/><path d="M1000.500 161v-5.500h6M1149.500 155.500h6v5.500M1155.500 208v5.500h-6M1006.500 213.500h-6V208" fill="none" stroke="#0d6cb4"/>
${info(1007, 221.500, 1139.500, 275.500)}${info(1007, 303, 1139.500, 361)}${info(1005.500, 383, 1138, 441)}
<g fill="url(#tipR)"><rect x="1046" y="221" width="55" height="1.500"/><rect x="1046" y="275" width="55" height="1.500"/><rect x="1046" y="302.500" width="55" height="1.500"/><rect x="1046" y="360.500" width="55" height="1.500"/><rect x="1045" y="382.500" width="55" height="1.500"/><rect x="1045" y="440.500" width="55" height="1.500"/></g>
${mt(623.700, 177.500, '普惠贷款发放', 10.200, '#c9dcf5', 61, 'middle')}
${[['注册用户', 206.500], ['入驻机构', 236], ['贷款申请', 266], ['发放笔数', 300.500], ['放款金额', 329]].map(([s, y]) => mt(558, y, s, 9.300, '#f2f6fa', 37.500)).join('')}
${[['1XXXX人', 690, 207, 32], ['2XX家', 683, 238.500, 23], ['1XXXX笔', 684, 268.500, 32], ['8XXX笔', 686, 300.500, 29], ['4.XX亿元', 685, 333.500, 38]].map(([s, x, y, w]) => mt(x, y, s, 9, '#45c9cf', w, 'end', 700, SER)).join('')}
${mt(1007, 182.500, '线上渠道销售额: 2XXX万元', 13.500, '#e4eaf2', 145, 'start', 700, SER)}
${mt(1009, 202, '头部品牌销售额: 1xxx万元', 13.500, '#e4eaf2', 144, 'start', 700, SER)}
${mt(1010.500, 241.500, '某省份某品牌食品工业公司', 10.500, '#14a0ee', 124.500)}
${mt(1040, 259.500, '某市某镇某村3组', 7.500, '#14a0ee', 58)}
${mt(1010.500, 323, '某省份某品牌食品有限公司', 10.500, '#8bc34a', 124.500)}
${mt(1057, 345.500, '某市某县', 7.800, '#8bc34a', 32)}
${mt(1003.500, 405, '国家地理标志性农产品-某品牌', 10.800, '#f5e138', 140)}
${mt(1028, 426, '中国某省某市某县XX路西段', 8, '#d8cc3c', 94)}`;
```
